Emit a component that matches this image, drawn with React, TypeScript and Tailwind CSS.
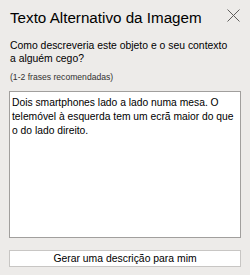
import React from "react";

export default function App() {
  return (
    <div
      className="w-[250px] h-[275px] bg-[#edebe9] text-[#201f1e] relative overflow-hidden"
      style={{ fontFamily: '"Liberation Sans", Arial, sans-serif' }}
    >
      <div className="flex items-start justify-between pl-[10px] pr-[10px] pt-[8px]">
        <div className="text-[15.2px] leading-[20px] text-black">Texto Alternativo da Imagem</div>
        <svg width="13" height="13" viewBox="0 0 13 13" className="mt-[1px]">
          <path d="M0.5 0.5 L12.5 12.5 M12.5 0.5 L0.5 12.5" stroke="#605e5c" strokeWidth="1" fill="none" />
        </svg>
      </div>
      <div className="px-[10px] pt-[11px] text-[10.4px] leading-[13px] text-black">
        Como descreveria este objeto e o seu contexto
        <br />a alguém cego?
      </div>
      <div className="px-[10px] pt-[6px] text-[8.6px] leading-[12px] text-[#323130]">(1-2 frases recomendadas)</div>
      <div className="mx-[9px] mt-[8px] h-[147px] bg-white border border-[#a19f9d] px-[2px] pt-[4px] text-[10.3px] leading-[14px] text-black whitespace-nowrap">
        Dois smartphones lado a lado numa mesa. O
        <br />
        telemóvel à esquerda tem um ecrã maior do que
        <br />o do lado direito.
      </div>
      <div className="mx-[9px] mt-[12px] h-[17px] bg-white border border-[#c8c6c4] flex items-center justify-center text-[10.4px] text-black">
        Gerar uma descrição para mim
      </div>
    </div>
  );
}
